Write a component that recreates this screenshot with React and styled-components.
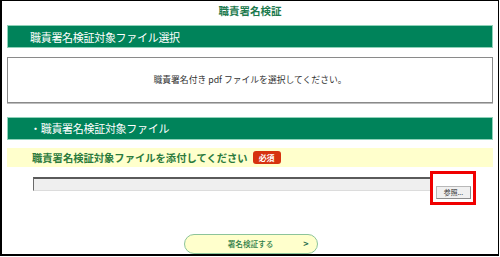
import React from 'react';
import styled, { createGlobalStyle } from 'styled-components';

const GlobalStyle = createGlobalStyle`
    html, body {
        margin: 0;
        padding: 0;
        background: #fff;
    }
    body {
        font-family: "Noto Sans CJK JP", "Noto Sans", sans-serif;
    }
`

const Frame = styled.div`
    box-sizing: border-box;
    width: 499px;
    height: 256px;
    border-style: solid;
    border-color: #000;
    border-width: 1px 1px 2px 2px;
    padding: 0 5px;
    display: flex;
    flex-direction: column;
`

const Title = styled.h1`
    margin: 0;
    height: 25px;
    line-height: 20px;
    text-align: center;
    font-size: 10.5px;
    font-weight: 700;
    color: #1d7a4e;
`

const SectionBar = styled.div`
    box-sizing: border-box;
    height: 24px;
    margin-top: ${p => p.$top || 0}px;
    padding-left: 22px;
    display: flex;
    align-items: center;
    background: #00835a;
    border: 1px solid #8fd2b9;
    color: #fff;
    font-size: 11px;
    letter-spacing: -0.3px;
`

const InfoBox = styled.div`
    box-sizing: border-box;
    height: 47px;
    margin-top: 9px;
    border: 1px solid #8a8a8a;
    box-shadow: 0 1px 0 #bdbdbd;
    display: flex;
    align-items: center;
    justify-content: center;
    font-size: 8.8px;
    color: #333;
`

const FieldLabel = styled.div`
    box-sizing: border-box;
    height: 20px;
    margin-top: 8px;
    padding-left: 25px;
    display: flex;
    align-items: center;
    gap: 5px;
    background: #ffffcc;
    color: #2b7a3c;
    font-size: 10.3px;
    font-weight: 700;
`

const Required = styled.span`
    display: inline-flex;
    align-items: center;
    justify-content: center;
    width: 28px;
    height: 13px;
    border-radius: 3px;
    background: #d6320f;
    color: #fff;
    font-size: 8px;
    font-weight: 700;
`

const FileRow = styled.div`
    margin-top: 9px;
    padding-left: 26px;
    display: flex;
    align-items: flex-start;
`

const FileInput = styled.div`
    box-sizing: border-box;
    width: 400px;
    height: 14px;
    margin-top: 1px;
    background: #efefef;
    border-style: solid;
    border-width: 2px 1px 1px 1px;
    border-color: #5a5a5a #dcdcdc #dcdcdc #6a6a6a;
`

const BrowseWrap = styled.div`
    position: relative;
    margin-left: 3px;
`

const BrowseButton = styled.button`
    box-sizing: border-box;
    width: 35px;
    height: 13px;
    padding: 0;
    background: #f0f0f0;
    border: 1px solid #b8b8b8;
    border-right-color: #8c8c8c;
    border-bottom-color: #8c8c8c;
    font-family: inherit;
    font-size: 6.8px;
    color: #333;
    line-height: 1;
`

const Highlight = styled.span`
    position: absolute;
    left: -6px;
    right: -5px;
    top: -5px;
    bottom: -5px;
    border: 3px solid #f00000;
    pointer-events: none;
`

const Actions = styled.div`
    margin-top: 34px;
    display: flex;
    justify-content: center;
    padding-left: 1px;
`

const SubmitButton = styled.button`
    box-sizing: border-box;
    width: 134px;
    height: 20px;
    padding: 0 8px;
    display: grid;
    grid-template-columns: 1fr auto 1fr;
    align-items: center;
    background: #ffffcc;
    border: 1px solid #8cc49a;
    border-radius: 10px;
    color: #2e7d47;
    font-family: inherit;
    font-size: 7.6px;
    font-weight: 500;
`

const Chevron = styled.span`
    justify-self: end;
    font-size: 9px;
    font-weight: 700;
    color: #2e6f4f;
`

export default function App() {
    return <>
        <GlobalStyle />
        <Frame>
            <Title>職責署名検証</Title>
            <SectionBar>職責署名検証対象ファイル選択</SectionBar>
            <InfoBox>職責署名付き pdf ファイルを選択してください。</InfoBox>
            <SectionBar $top={14}>・職責署名検証対象ファイル</SectionBar>
            <FieldLabel>
                職責署名検証対象ファイルを添付してください
                <Required>必須</Required>
            </FieldLabel>
            <FileRow>
                <FileInput />
                <BrowseWrap>
                    <BrowseButton type="button">参照...</BrowseButton>
                    <Highlight />
                </BrowseWrap>
            </FileRow>
            <Actions>
                <SubmitButton type="button">
                    <span />
                    <span>署名検証する</span>
                    <Chevron>&gt;</Chevron>
                </SubmitButton>
            </Actions>
        </Frame>
    </>
}
